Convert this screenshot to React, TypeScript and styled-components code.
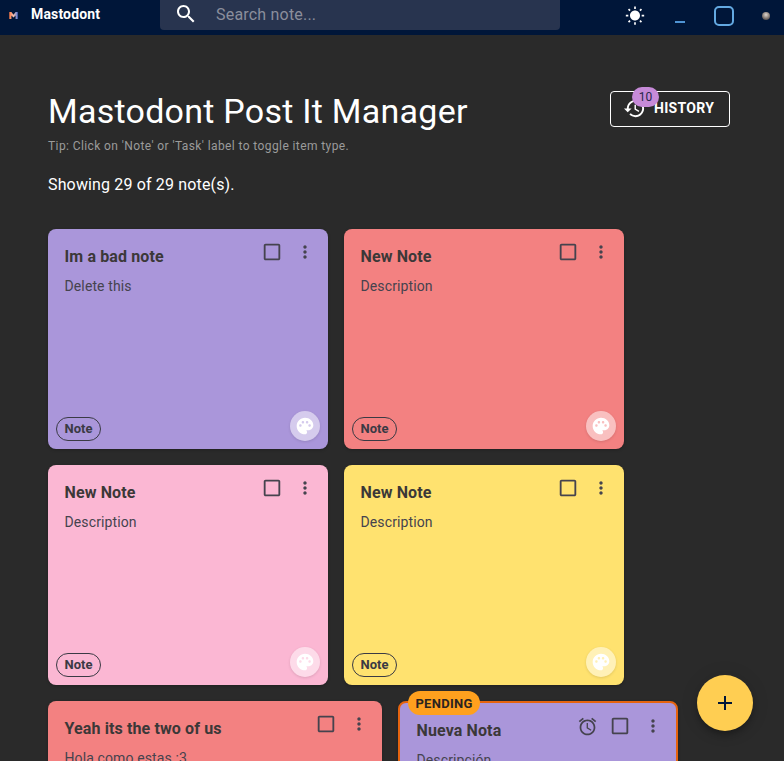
import React from "react";
import styled, { createGlobalStyle } from "styled-components";

const Global = createGlobalStyle`
  html, body { margin: 0; padding: 0; height: 100%; background: #2a2a2a; }
  body { font-family: Roboto, "Liberation Sans", sans-serif; overflow: hidden; }
  #root { height: 100%; }
  * { box-sizing: border-box; }
`;

const P = {
  search: "M15.5 14h-.79l-.28-.27C15.41 12.59 16 11.11 16 9.5 16 5.91 13.09 3 9.5 3S3 5.91 3 9.5 5.91 16 9.5 16c1.61 0 3.09-.59 4.23-1.57l.27.28v.79l5 4.99L20.49 19l-4.99-5zm-6 0C7.01 14 5 11.99 5 9.5S7.01 5 9.5 5 14 7.01 14 9.5 11.99 14 9.5 14z",
  sun: "M6.76 4.84l-1.8-1.79-1.41 1.41 1.79 1.79 1.42-1.41zM4 10.5H1v2h3v-2zm9-9.95h-2V3.5h2V.55zm7.45 3.91l-1.41-1.41-1.79 1.79 1.41 1.41 1.79-1.79zm-3.21 13.7l1.79 1.8 1.41-1.41-1.8-1.79-1.4 1.4zM20 10.5v2h3v-2h-3zm-8-5c-3.31 0-6 2.69-6 6s2.69 6 6 6 6-2.69 6-6-2.69-6-6-6zm-1 16.95h2V19.5h-2v2.95zm-7.45-3.91l1.41 1.41 1.79-1.8-1.41-1.41-1.79 1.8z",
  check: "M19 5v14H5V5h14m0-2H5c-1.1 0-2 .9-2 2v14c0 1.1.9 2 2 2h14c1.1 0 2-.9 2-2V5c0-1.1-.9-2-2-2z",
  more: "M12 8c1.1 0 2-.9 2-2s-.9-2-2-2-2 .9-2 2 .9 2 2 2zm0 2c-1.1 0-2 .9-2 2s.9 2 2 2 2-.9 2-2-.9-2-2-2zm0 6c-1.1 0-2 .9-2 2s.9 2 2 2 2-.9 2-2-.9-2-2-2z",
  palette: "M12 2C6.49 2 2 6.49 2 12s4.49 10 10 10c1.38 0 2.5-1.12 2.5-2.5 0-.61-.23-1.2-.64-1.67-.08-.1-.13-.21-.13-.33 0-.28.22-.5.5-.5H16c3.31 0 6-2.69 6-6 0-4.96-4.49-9-10-9zm5.5 11c-.83 0-1.5-.67-1.5-1.5s.67-1.5 1.5-1.5 1.5.67 1.5 1.5-.67 1.5-1.5 1.5zm-3-4c-.83 0-1.5-.67-1.5-1.5S13.67 6 14.5 6s1.5.67 1.5 1.5S15.33 9 14.5 9zM5 11.5c0-.83.67-1.5 1.5-1.5s1.5.67 1.5 1.5S7.33 13 6.5 13 5 12.33 5 11.5zm6-4c0 .83-.67 1.5-1.5 1.5S8 8.33 8 7.5 8.67 6 9.5 6s1.5.67 1.5 1.5z",
  history: "M13 3c-4.97 0-9 4.03-9 9H1l3.89 3.89.07.14L9 12H6c0-3.87 3.13-7 7-7s7 3.13 7 7-3.13 7-7 7c-1.93 0-3.68-.79-4.94-2.06l-1.42 1.42C8.27 19.99 10.51 21 13 21c4.97 0 9-4.03 9-9s-4.03-9-9-9zm-1 5v5l4.28 2.54.72-1.21-3.5-2.08V8H12z",
  alarm: "m22 5.72-4.6-3.86-1.29 1.53 4.6 3.86L22 5.72zM7.88 3.39 6.6 1.86 2 5.71l1.29 1.53 4.59-3.85zM12.5 8H11v6l4.75 2.85.75-1.23-4-2.37V8zM12 4c-4.97 0-9 4.03-9 9s4.02 9 9 9c4.97 0 9-4.03 9-9s-4.03-9-9-9zm0 16c-3.87 0-7-3.13-7-7s3.13-7 7-7 7 3.13 7 7-3.13 7-7 7z",
  add: "M19 13h-6v6h-2v-6H5v-2h6V5h2v6h6v2z",
};

const Icon = ({ d, size = 24, color = "currentColor" }: { d: string; size?: number; color?: string }) => (
  <svg width={size} height={size} viewBox="0 0 24 24" fill={color} style={{ display: "block" }}>
    <path d={d} />
  </svg>
);

const Shell = styled.div`
  height: 100%;
  display: flex;
  flex-direction: column;
  overflow: hidden;
`;

const AppBar = styled.header`
  flex: none;
  height: 35px;
  background: #001639;
  display: flex;
  align-items: flex-start;
  color: #fff;
`;

const Brand = styled.div`
  width: 160px;
  height: 28px;
  padding-left: 9px;
  display: flex;
  align-items: center;
  font-size: 14px;
  font-weight: 700;
  letter-spacing: 0.15px;
`;

const LogoSlot = styled.span`
  width: 22px;
  flex: none;
  padding-top: 2px;
`;

const Search = styled.div`
  width: 400px;
  height: 30px;
  background: #28344f;
  border-radius: 0 0 4px 4px;
  display: flex;
  align-items: center;
  padding: 0 0 2px 14px;
  gap: 18px;
`;

const SearchInput = styled.input`
  flex: 1;
  min-width: 0;
  border: 0;
  outline: 0;
  background: transparent;
  font: 400 16px Roboto, sans-serif;
  letter-spacing: 0.2px;
  color: #fff;
  padding: 0;
  &::placeholder { color: #8b8e9c; opacity: 1; }
`;

const Controls = styled.div`
  flex: 1;
  height: 30px;
  display: flex;
  align-items: center;
  padding-left: 65px;
`;

const SunSlot = styled.div`
  width: 40px;
  margin-top: 1px;
  margin-right: 10px;
`;

const MinBar = styled.div`
  width: 10px;
  height: 2px;
  background: #4f94d4;
  margin-top: 13px;
  margin-right: 29px;
`;

const MaxBox = styled.div`
  width: 20px;
  height: 20px;
  border: 2px solid #63a9e2;
  border-radius: 5px;
  margin-top: 1px;
  margin-right: 28px;
`;

const Orb = styled.div`
  width: 8px;
  height: 8px;
  margin-top: 1px;
  border-radius: 50%;
  background: radial-gradient(circle at 50% 35%, #ddd6d0 0%, #8a7f78 50%, #2a2a30 100%);
`;

const Main = styled.main`
  flex: 1;
  padding: 0 54px 0 48px;
  min-height: 0;
`;

const HeadRow = styled.div`
  display: flex;
  justify-content: space-between;
  align-items: flex-start;
  padding-top: 56px;
`;

const Title = styled.h1`
  margin: 0;
  font-size: 34px;
  font-weight: 400;
  line-height: 40px;
  letter-spacing: 0.25px;
  color: #fff;
`;

const Tip = styled.p`
  margin: 6px 0 0;
  font-size: 12px;
  line-height: 18px;
  letter-spacing: 0.4px;
  color: #9b9b9b;
`;

const Count = styled.p`
  margin: 18px 0 0;
  font-size: 16px;
  line-height: 24px;
  letter-spacing: 0.15px;
  color: #fff;
`;

const HistoryButton = styled.button`
  position: relative;
  width: 120px;
  height: 36px;
  background: transparent;
  border: 1px solid #fff;
  border-radius: 4px;
  color: #fff;
  font: 700 14px Roboto, sans-serif;
  letter-spacing: 0.3px;
  display: flex;
  align-items: center;
  padding: 0 0 2px 12px;
  gap: 8px;
  text-transform: uppercase;
`;

const Badge = styled.span`
  position: absolute;
  left: 21px;
  top: -5px;
  width: 27px;
  height: 20px;
  border-radius: 10px;
  background: #c68ad8;
  color: #26264a;
  font-size: 12px;
  font-weight: 400;
  letter-spacing: 0;
  display: flex;
  align-items: center;
  justify-content: center;
`;

const Notes = styled.div`
  display: flex;
  flex-wrap: wrap;
  gap: 16px;
  margin-top: 32px;
`;

const Card = styled.article<{ $bg: string; $width?: number; $pending?: boolean }>`
  position: relative;
  width: ${(p) => p.$width ?? 280}px;
  height: 220px;
  border-radius: 8px;
  background: ${(p) => p.$bg};
  border: ${(p) => (p.$pending ? "2px solid #e6640f" : "0")};
  display: flex;
  flex-direction: column;
  color: #3a3a44;
  box-shadow: 0 1px 3px rgba(0, 0, 0, 0.25);
`;

const CardHead = styled.div`
  display: flex;
  justify-content: space-between;
  align-items: flex-start;
  padding: 16px 7px 0 16.5px;
`;

const CardTitle = styled.h2`
  margin: 0;
  font-size: 16px;
  font-weight: 700;
  line-height: 24px;
  letter-spacing: 0.12px;
  color: #3b3838;
`;

const Actions = styled.div`
  display: flex;
  align-items: center;
  margin-top: -4px;
  color: #45434e;
`;

const ActionSlot = styled.span`
  width: 33px;
  display: flex;
  justify-content: center;
`;

const AlarmSlot = styled(ActionSlot)`
  width: 31px;
`;

const CardBody = styled.p`
  margin: 7px 0 0;
  padding: 0 16.5px;
  font-size: 14px;
  line-height: 20px;
  letter-spacing: 0.12px;
  color: #45434e;
`;

const CardFoot = styled.div`
  margin-top: auto;
  padding: 0 8px 8px;
  display: flex;
  justify-content: space-between;
  align-items: flex-end;
`;

const Chip = styled.span`
  width: 45px;
  height: 24px;
  padding-bottom: 1px;
  border: 1px solid currentColor;
  border-radius: 12px;
  font-size: 13px;
  font-weight: 700;
  display: flex;
  align-items: center;
  justify-content: center;
`;

const PaletteButton = styled.span`
  width: 30px;
  height: 30px;
  border-radius: 50%;
  background: rgba(255, 255, 255, 0.5);
  box-shadow: 0 1px 3px rgba(0, 0, 0, 0.12);
  display: flex;
  align-items: center;
  justify-content: center;
`;

const Pending = styled.span`
  position: absolute;
  left: 8px;
  top: -12px;
  width: 72px;
  height: 24px;
  border-radius: 12px;
  background: #ffa01e;
  color: #2a2420;
  font-size: 13px;
  font-weight: 700;
  letter-spacing: 0.3px;
  display: flex;
  align-items: center;
  justify-content: center;
`;

const Fab = styled.button`
  position: fixed;
  left: 697px;
  top: 675px;
  width: 56px;
  height: 56px;
  border: 0;
  border-radius: 50%;
  background: #ffce52;
  color: #001639;
  display: flex;
  align-items: center;
  justify-content: center;
  padding: 0;
  box-shadow: 0 3px 5px -1px rgba(0,0,0,.2), 0 6px 10px rgba(0,0,0,.14), 0 1px 18px rgba(0,0,0,.12);
`;

const Logo = () => (
  <svg width="9" height="7" viewBox="0 0 12 10" style={{ display: "block" }}>
    <defs>
      <linearGradient id="lg" x1="0" y1="0" x2="1" y2="0">
        <stop offset="0" stopColor="#ff7a45" />
        <stop offset="0.5" stopColor="#f2c0b0" />
        <stop offset="1" stopColor="#5a7ad8" />
      </linearGradient>
    </defs>
    <path d="M0 10V0h3l3 4 3-4h3v10H9V5L6 8 3 5v5z" fill="url(#lg)" />
  </svg>
);

type Note = { title: string; body: string; bg: string; width?: number; pending?: boolean };

const notes: Note[] = [
  { title: "Im a bad note", body: "Delete this", bg: "#aa96da" },
  { title: "New Note", body: "Description", bg: "#f38181" },
  { title: "New Note", body: "Description", bg: "#fbb7d3" },
  { title: "New Note", body: "Description", bg: "#ffe26f" },
  { title: "Yeah its the two of us", body: "Hola como estas :3", bg: "#f38181", width: 334 },
  { title: "Nueva Nota", body: "Descripción", bg: "#aa96da", pending: true },
];

export default function App() {
  return (
    <Shell>
      <Global />
      <AppBar>
        <Brand>
          <LogoSlot>
            <Logo />
          </LogoSlot>
          Mastodont
        </Brand>
        <Search>
          <Icon d={P.search} size={24} color="#fff" />
          <SearchInput placeholder="Search note..." />
        </Search>
        <Controls>
          <SunSlot>
            <Icon d={P.sun} size={20} color="#fff" />
          </SunSlot>
          <MinBar />
          <MaxBox />
          <Orb />
        </Controls>
      </AppBar>
      <Main>
        <HeadRow>
          <div>
            <Title>Mastodont Post It Manager</Title>
            <Tip>Tip: Click on 'Note' or 'Task' label to toggle item type.</Tip>
            <Count>Showing 29 of 29 note(s).</Count>
          </div>
          <HistoryButton>
            <Icon d={P.history} size={23} />
            History
            <Badge>10</Badge>
          </HistoryButton>
        </HeadRow>
        <Notes>
          {notes.map((n, i) => (
            <Card key={i} $bg={n.bg} $width={n.width} $pending={n.pending}>
              {n.pending && <Pending>PENDING</Pending>}
              <CardHead>
                <CardTitle>{n.title}</CardTitle>
                <Actions>
                  {n.pending && (
                    <AlarmSlot>
                      <Icon d={P.alarm} size={21} />
                    </AlarmSlot>
                  )}
                  <ActionSlot>
                    <Icon d={P.check} size={22} />
                  </ActionSlot>
                  <ActionSlot>
                    <Icon d={P.more} size={20} />
                  </ActionSlot>
                </Actions>
              </CardHead>
              <CardBody>{n.body}</CardBody>
              <CardFoot>
                <Chip>Note</Chip>
                <PaletteButton>
                  <Icon d={P.palette} size={20} color="#fff" />
                </PaletteButton>
              </CardFoot>
            </Card>
          ))}
        </Notes>
      </Main>
      <Fab aria-label="add">
        <Icon d={P.add} size={24} />
      </Fab>
    </Shell>
  );
}
